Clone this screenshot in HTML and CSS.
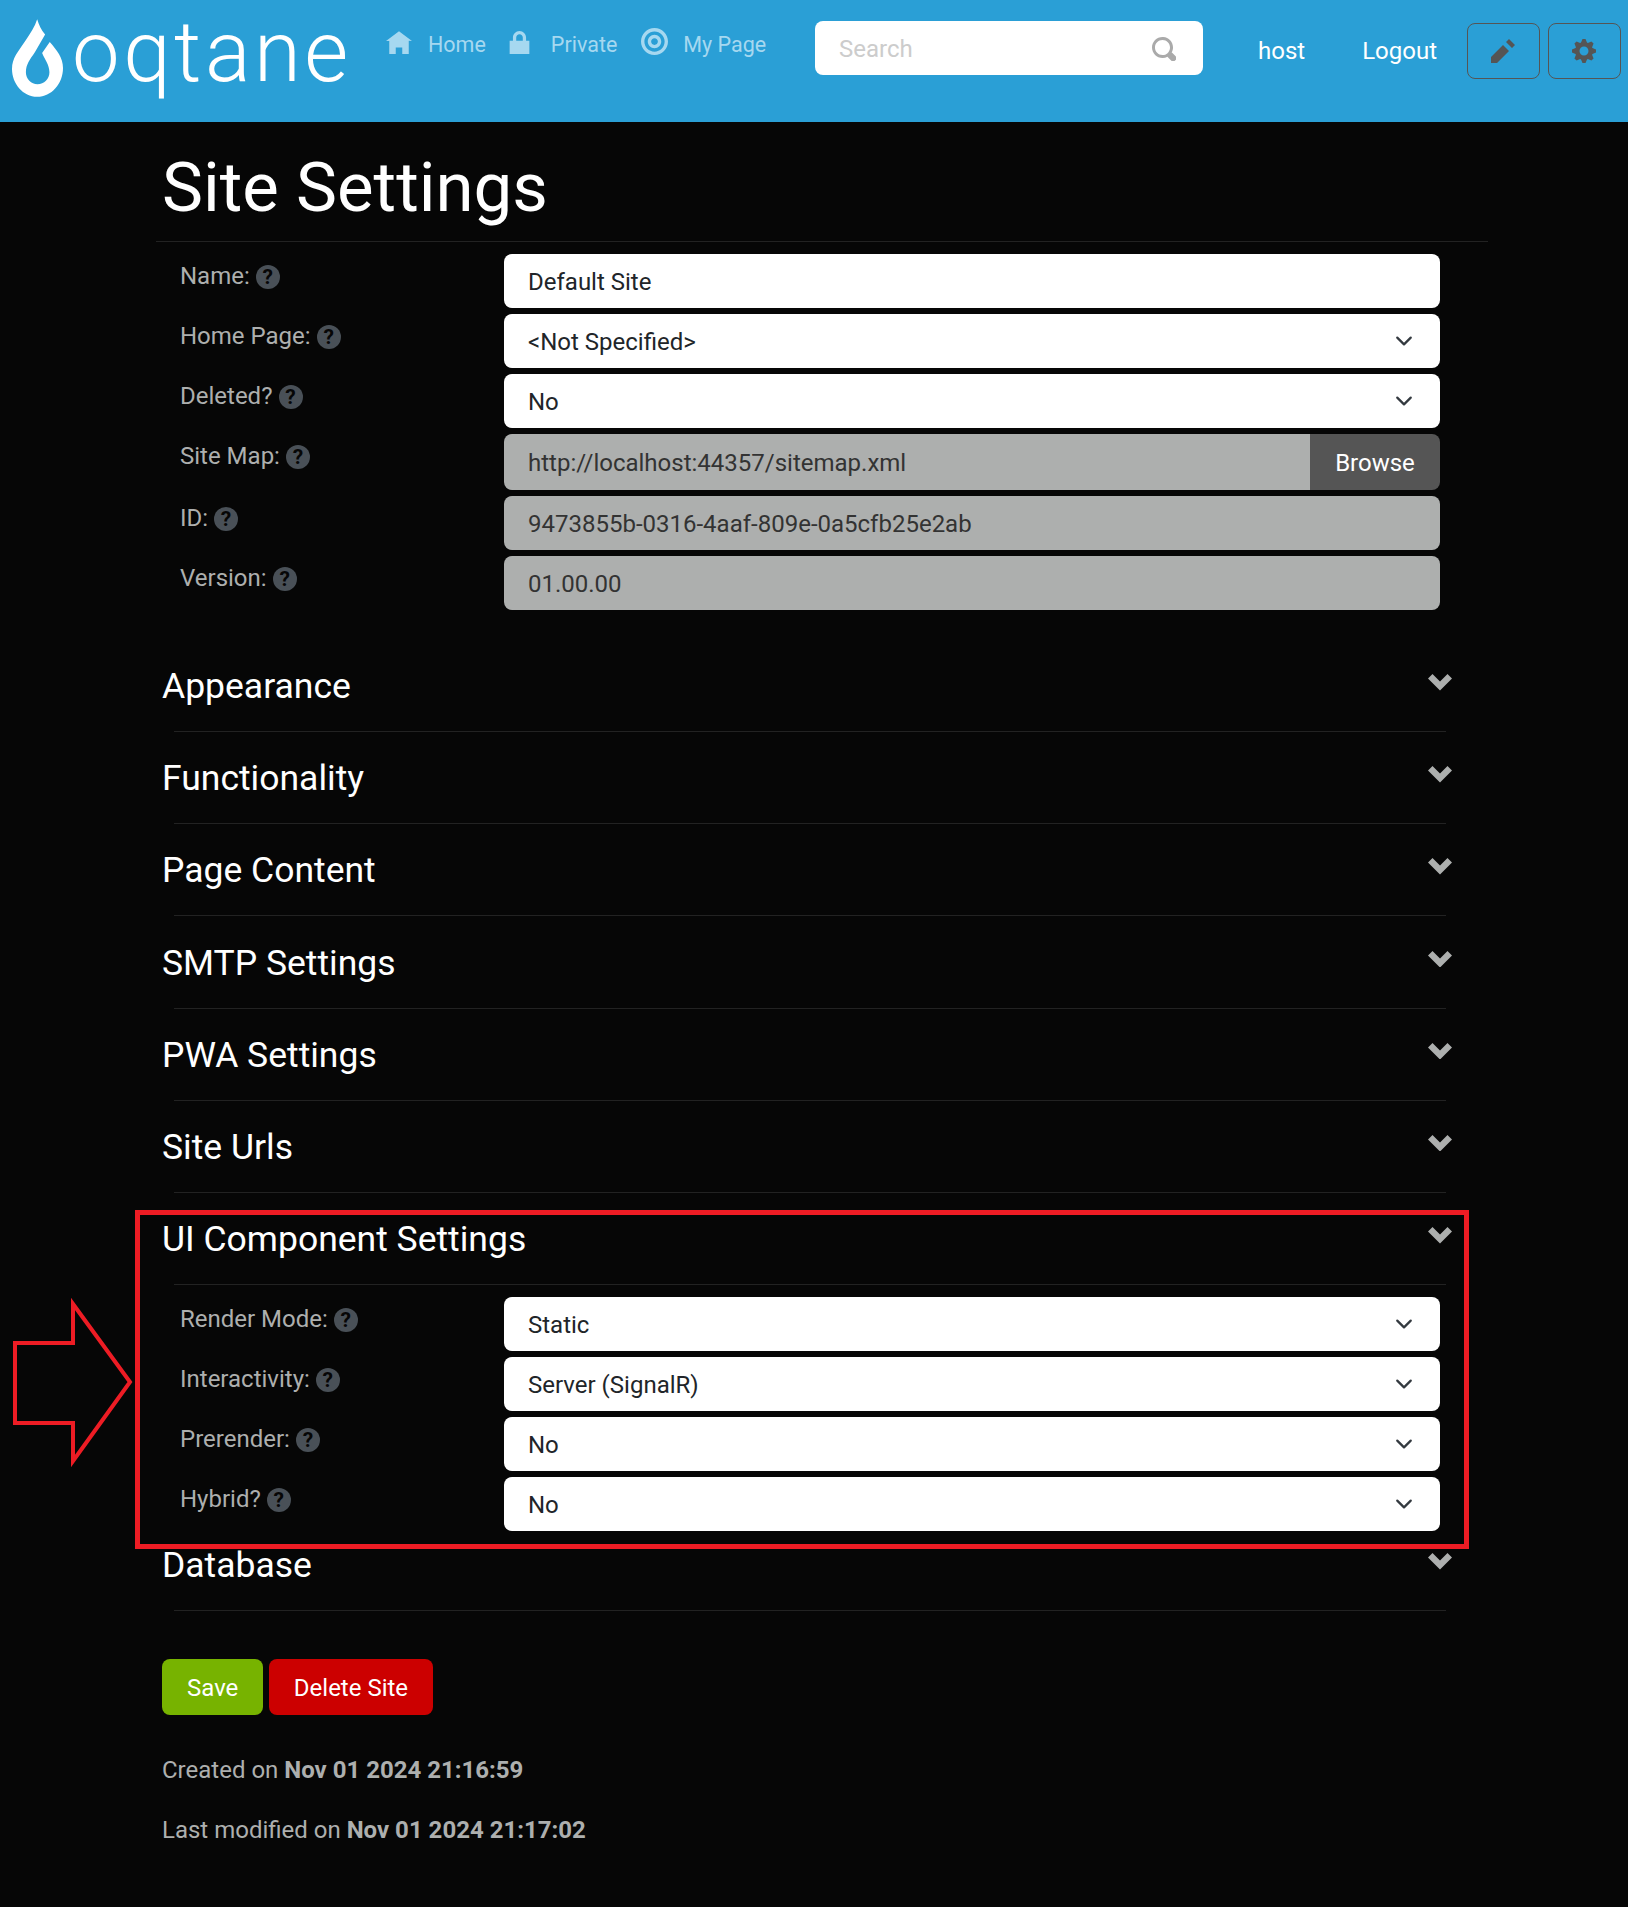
FILE: index.html
```html
<!DOCTYPE html>
<html lang="en">
<head>
    <meta charset="UTF-8">
    <meta name="viewport" content="width=device-width, initial-scale=1.0">
    <title>Site Settings</title>
    <link rel="stylesheet" href="styles.css">
</head>
<body>
    <header class="topbar">
        <div class="logo">
            <svg class="logo-drop" viewBox="36 28 154 234">
                <path d="M112 28C117 45 124 60 136 74L105 128C90 150 78 165 78 188C78 208 94 224 113 224C133 224 149 208 149 188C149 165 135 150 127 130L150 97C172 122 190 145 190 175C190 223 155 262 112 262C70 262 36 223 36 178C36 145 55 125 75 95C92 70 105 50 112 28Z"/>
            </svg>
            <span class="logo-text">oqtane</span>
        </div>
        <nav class="menu">
            <a class="menu-item"><svg class="menu-icon home" viewBox="0 0 8 7"><path d="M4 0l-4 3h1v4h2v-2h2v2h2v-4.03l1 .03-4-3z"/></svg>Home</a>
            <a class="menu-item"><svg class="menu-icon lock" viewBox="1 0 6 7"><path d="M4 0c-1.1 0-2 .9-2 2v1h-1v4h6v-4h-1v-1c0-1.1-.9-2-2-2zm0 1c.56 0 1 .44 1 1v1h-2v-1c0-.56.44-1 1-1z"/></svg>Private</a>
            <a class="menu-item"><svg class="menu-icon target" viewBox="0 0 8 8"><path d="M4 0c-2.2 0-4 1.8-4 4s1.8 4 4 4 4-1.8 4-4-1.8-4-4-4zm0 1c1.66 0 3 1.34 3 3s-1.34 3-3 3-3-1.34-3-3 1.34-3 3-3zm0 1c-1.1 0-2 .9-2 2s.9 2 2 2 2-.9 2-2-.9-2-2-2zm0 1c.56 0 1 .44 1 1s-.44 1-1 1-1-.44-1-1 .44-1 1-1z"/></svg>My Page</a>
        </nav>
        <div class="search">
            <span>Search</span>
            <svg class="search-icon" viewBox="0 0 8 8"><path d="M3.5 0c-1.93 0-3.5 1.57-3.5 3.5s1.57 3.5 3.5 3.5c.59 0 1.17-.14 1.66-.41a1 1 0 0 0 .13.13l1 1a1.02 1.02 0 1 0 1.44-1.44l-1-1a1 1 0 0 0-.16-.13c.27-.49.44-1.06.44-1.66 0-1.93-1.57-3.5-3.5-3.5zm0 1c1.39 0 2.5 1.11 2.5 2.5 0 .66-.24 1.27-.66 1.72-.01.01-.02.02-.03.03a1 1 0 0 0-.13.13c-.44.4-1.04.63-1.69.63-1.39 0-2.5-1.11-2.5-2.5s1.11-2.5 2.5-2.5z"/></svg>
        </div>
        <a class="user-link host">host</a>
        <a class="user-link logout">Logout</a>
        <button class="tool-btn"><svg viewBox="0 0 8 8"><path d="M6 0l-1 1 2 2 1-1-2-2zm-2 2l-4 4v2h2l4-4-2-2z"/></svg></button>
        <button class="tool-btn"><svg viewBox="0 0 8 8"><path d="M3.5 0l-.5 1.19c-.1.03-.19.08-.28.13l-1.19-.5-.72.72.5 1.19c-.05.1-.09.18-.13.28l-1.19.5v1l1.19.5c.04.1.08.18.13.28l-.5 1.19.72.72 1.19-.5c.09.04.18.09.28.13l.5 1.19h1l.5-1.19c.09-.04.19-.08.28-.13l1.19.5.72-.72-.5-1.19c.04-.09.09-.19.13-.28l1.19-.5v-1l-1.19-.5c-.03-.09-.08-.19-.13-.28l.5-1.19-.72-.72-1.19.5c-.09-.04-.19-.09-.28-.13l-.5-1.19h-1zm.5 2.5c.83 0 1.5.67 1.5 1.5s-.67 1.5-1.5 1.5-1.5-.67-1.5-1.5.67-1.5 1.5-1.5z"/></svg></button>
    </header>

    <main class="content">
        <h1 class="page-title">Site Settings</h1>

        <div class="form-rows first-rows">
            <div class="row">
                <label class="row-label">Name:<span class="help">?</span></label>
                <div class="control">Default Site</div>
            </div>
            <div class="row">
                <label class="row-label">Home Page:<span class="help">?</span></label>
                <div class="control select">&lt;Not Specified&gt;<svg class="select-arrow" viewBox="0 0 16 16"><path d="M2 5l6 6 6-6"/></svg></div>
            </div>
            <div class="row">
                <label class="row-label">Deleted?<span class="help">?</span></label>
                <div class="control select">No<svg class="select-arrow" viewBox="0 0 16 16"><path d="M2 5l6 6 6-6"/></svg></div>
            </div>
            <div class="row">
                <label class="row-label">Site Map:<span class="help">?</span></label>
                <div class="input-group">
                    <div class="control disabled">http://localhost:44357/sitemap.xml</div>
                    <button class="browse">Browse</button>
                </div>
            </div>
            <div class="row">
                <label class="row-label">ID:<span class="help">?</span></label>
                <div class="control disabled">9473855b-0316-4aaf-809e-0a5cfb25e2ab</div>
            </div>
            <div class="row">
                <label class="row-label">Version:<span class="help">?</span></label>
                <div class="control disabled">01.00.00</div>
            </div>
        </div>

        <section class="panel">
            <div class="panel-head"><h2>Appearance</h2><svg class="chevron" viewBox="0 0 8 5.5"><path d="M1.5 0l-1.5 1.5 4 4 4-4-1.5-1.5-2.5 2.5-2.5-2.5z"/></svg></div>
            <hr class="panel-line">
        </section>
        <section class="panel">
            <div class="panel-head"><h2>Functionality</h2><svg class="chevron" viewBox="0 0 8 5.5"><path d="M1.5 0l-1.5 1.5 4 4 4-4-1.5-1.5-2.5 2.5-2.5-2.5z"/></svg></div>
            <hr class="panel-line">
        </section>
        <section class="panel">
            <div class="panel-head"><h2>Page Content</h2><svg class="chevron" viewBox="0 0 8 5.5"><path d="M1.5 0l-1.5 1.5 4 4 4-4-1.5-1.5-2.5 2.5-2.5-2.5z"/></svg></div>
            <hr class="panel-line">
        </section>
        <section class="panel">
            <div class="panel-head"><h2>SMTP Settings</h2><svg class="chevron" viewBox="0 0 8 5.5"><path d="M1.5 0l-1.5 1.5 4 4 4-4-1.5-1.5-2.5 2.5-2.5-2.5z"/></svg></div>
            <hr class="panel-line">
        </section>
        <section class="panel">
            <div class="panel-head"><h2>PWA Settings</h2><svg class="chevron" viewBox="0 0 8 5.5"><path d="M1.5 0l-1.5 1.5 4 4 4-4-1.5-1.5-2.5 2.5-2.5-2.5z"/></svg></div>
            <hr class="panel-line">
        </section>
        <section class="panel">
            <div class="panel-head"><h2>Site Urls</h2><svg class="chevron" viewBox="0 0 8 5.5"><path d="M1.5 0l-1.5 1.5 4 4 4-4-1.5-1.5-2.5 2.5-2.5-2.5z"/></svg></div>
            <hr class="panel-line">
        </section>
        <section class="panel open">
            <div class="panel-head"><h2>UI Component Settings</h2><svg class="chevron" viewBox="0 0 8 5.5"><path d="M1.5 0l-1.5 1.5 4 4 4-4-1.5-1.5-2.5 2.5-2.5-2.5z"/></svg></div>
            <hr class="panel-line">
            <div class="form-rows">
                <div class="row">
                    <label class="row-label">Render Mode:<span class="help">?</span></label>
                    <div class="control select">Static<svg class="select-arrow" viewBox="0 0 16 16"><path d="M2 5l6 6 6-6"/></svg></div>
                </div>
                <div class="row">
                    <label class="row-label">Interactivity:<span class="help">?</span></label>
                    <div class="control select">Server (SignalR)<svg class="select-arrow" viewBox="0 0 16 16"><path d="M2 5l6 6 6-6"/></svg></div>
                </div>
                <div class="row">
                    <label class="row-label">Prerender:<span class="help">?</span></label>
                    <div class="control select">No<svg class="select-arrow" viewBox="0 0 16 16"><path d="M2 5l6 6 6-6"/></svg></div>
                </div>
                <div class="row">
                    <label class="row-label">Hybrid?<span class="help">?</span></label>
                    <div class="control select">No<svg class="select-arrow" viewBox="0 0 16 16"><path d="M2 5l6 6 6-6"/></svg></div>
                </div>
            </div>
        </section>
        <section class="panel">
            <div class="panel-head"><h2>Database</h2><svg class="chevron" viewBox="0 0 8 5.5"><path d="M1.5 0l-1.5 1.5 4 4 4-4-1.5-1.5-2.5 2.5-2.5-2.5z"/></svg></div>
            <hr class="panel-line">
        </section>

        <div class="actions">
            <button class="btn save">Save</button>
            <button class="btn delete">Delete Site</button>
        </div>
        <p class="audit first-audit">Created on <b>Nov 01 2024 21:16:59</b></p>
        <p class="audit">Last modified on <b>Nov 01 2024 21:17:02</b></p>
    </main>

    <!-- red callout added over the screenshot -->
    <div class="callout-box"></div>
    <svg class="callout-arrow" viewBox="0 0 124 176"><path d="M3 47H61V8L118 86L61 165V127H3Z"/></svg>
</body>
</html>
```

FILE: styles.css
```css
* {
    box-sizing: border-box;
}

body {
    position: relative;
    margin: 0;
    height: 1907px;
    overflow: hidden;
    font-family: Roboto, "Liberation Sans", sans-serif;
    font-size: 24px;
    background-color: #060606;
    color: #adafae;
}

.topbar {
    display: flex;
    align-items: flex-start;
    height: 122px;
    background-color: #2a9fd6;
}

.topbar > * {
    flex-shrink: 0;
}

.logo {
    display: flex;
    width: 386px;
    padding-left: 12px;
}

.logo-drop {
    width: 51px;
    height: 78px;
    margin-top: 19px;
    fill: #fff;
}

.logo-text {
    margin: 10px 0 0 9px;
    font-size: 85px;
    font-weight: 300;
    letter-spacing: 3.5px;
    line-height: 85px;
    color: #fff;
}

.menu {
    display: flex;
    width: 429px;
    gap: 23px;
    padding-top: 30px;
    font-size: 21.5px;
    line-height: 30px;
    color: #a6d8f0;
}

.menu-item {
    display: flex;
}

.menu-icon {
    margin-right: 16px;
    fill: #a6d8f0;
}

.menu-icon.home {
    width: 26px;
    height: 23px;
    margin-top: 1px;
}

.menu-icon.lock {
    width: 21px;
    height: 23px;
    margin-top: 1px;
    margin-right: 21px;
}

.menu-icon.target {
    width: 27px;
    height: 27px;
    margin-top: -2px;
    margin-left: 1px;
    margin-right: 15px;
}

.search {
    display: flex;
    justify-content: space-between;
    align-items: center;
    width: 388px;
    height: 54px;
    margin-top: 21px;
    padding: 2px 27px 0 24px;
    border-radius: 8px;
    background-color: #fff;
    color: #ccc;
}

.search-icon {
    width: 24px;
    height: 24px;
    fill: #aaa;
}

.user-link {
    margin-top: 34px;
    line-height: 34px;
    color: #fff;
}

.host {
    margin-left: 55px;
}

.logout {
    margin-left: 57px;
    margin-right: 29.5px;
}

.tool-btn {
    width: 73px;
    height: 56px;
    margin: 23px 8px 0 0;
    padding: 0;
    border: 1px solid #555;
    border-radius: 8px;
    background: transparent;
}

.tool-btn svg {
    display: block;
    width: 24px;
    height: 24px;
    margin: -1px auto 0;
    fill: #555;
}

.content {
    width: 1332px;
    margin-left: 156px;
    padding-top: 27px;
}

.page-title {
    margin: 0;
    padding: 0 6px 15px;
    border-bottom: 1px solid #222;
    font-size: 69px;
    font-weight: 400;
    line-height: 77px;
    color: #fff;
}

.form-rows {
    display: flex;
    flex-direction: column;
    gap: 6px;
}

.first-rows {
    margin: 12px 0 54px;
}

.row {
    display: flex;
    padding: 0 48px 0 24px;
}

.row-label {
    display: flex;
    gap: 6px;
    width: 324px;
    height: 46px;
    padding-top: 3px;
    line-height: 38px;
}

.help {
    width: 24px;
    height: 24px;
    margin-top: 8px;
    border-radius: 50%;
    background-color: #495057;
    font-size: 21px;
    font-weight: 700;
    line-height: 24px;
    text-align: center;
    color: #060606;
}

.control {
    display: flex;
    justify-content: space-between;
    align-items: center;
    flex: 1;
    height: 54px;
    padding: 2px 27px 0 24px;
    border-radius: 8px;
    background-color: #fff;
    color: #212529;
}

.control.disabled {
    background-color: #adafae;
    color: #333;
}

.select-arrow {
    width: 18px;
    height: 18px;
    margin-top: -2px;
    fill: none;
    stroke: #343a40;
    stroke-width: 2;
    stroke-linecap: round;
    stroke-linejoin: round;
}

.input-group {
    display: flex;
    flex: 1;
    height: 56px;
}

.input-group .control {
    height: 56px;
    border-radius: 8px 0 0 8px;
}

.browse {
    width: 130px;
    padding: 2px 0 0;
    border: none;
    border-radius: 0 8px 8px 0;
    background-color: #555;
    font: inherit;
    color: #fff;
}

.panel {
    padding-bottom: 24.2px;
}

.panel-head {
    display: flex;
    justify-content: space-between;
    height: 44px;
    padding: 0 36px 0 6px;
}

.panel-head h2 {
    margin: 0;
    font-size: 35.5px;
    font-weight: 400;
    line-height: 44px;
    color: #fff;
}

.chevron {
    width: 24px;
    height: 16.5px;
    margin-top: 10px;
    fill: #adafae;
}

.panel-line {
    height: 1px;
    margin: 23px 42px 0 18px;
    border: none;
    background-color: #222;
}

.panel.open {
    padding-bottom: 12px;
}

.panel.open .form-rows {
    margin-top: 12px;
}

.actions {
    display: flex;
    gap: 6px;
    margin: 24px 0 0 6px;
}

.btn {
    height: 56px;
    padding: 2px 25px 0;
    border: none;
    border-radius: 8px;
    font: inherit;
    color: #fff;
}

.save {
    background-color: #77b300;
}

.delete {
    padding: 2px 24.5px 0;
    background-color: #c00;
}

.audit {
    margin: 24px 0 0 6px;
    line-height: 36px;
}

.first-audit {
    margin-top: 37px;
}

.callout-box {
    position: absolute;
    left: 135px;
    top: 1210px;
    width: 1334px;
    height: 339px;
    border: 5px solid #ed1c24;
}

.callout-arrow {
    position: absolute;
    left: 12px;
    top: 1296px;
    width: 124px;
    height: 176px;
    fill: none;
    stroke: #ed1c24;
    stroke-width: 4;
}
```
